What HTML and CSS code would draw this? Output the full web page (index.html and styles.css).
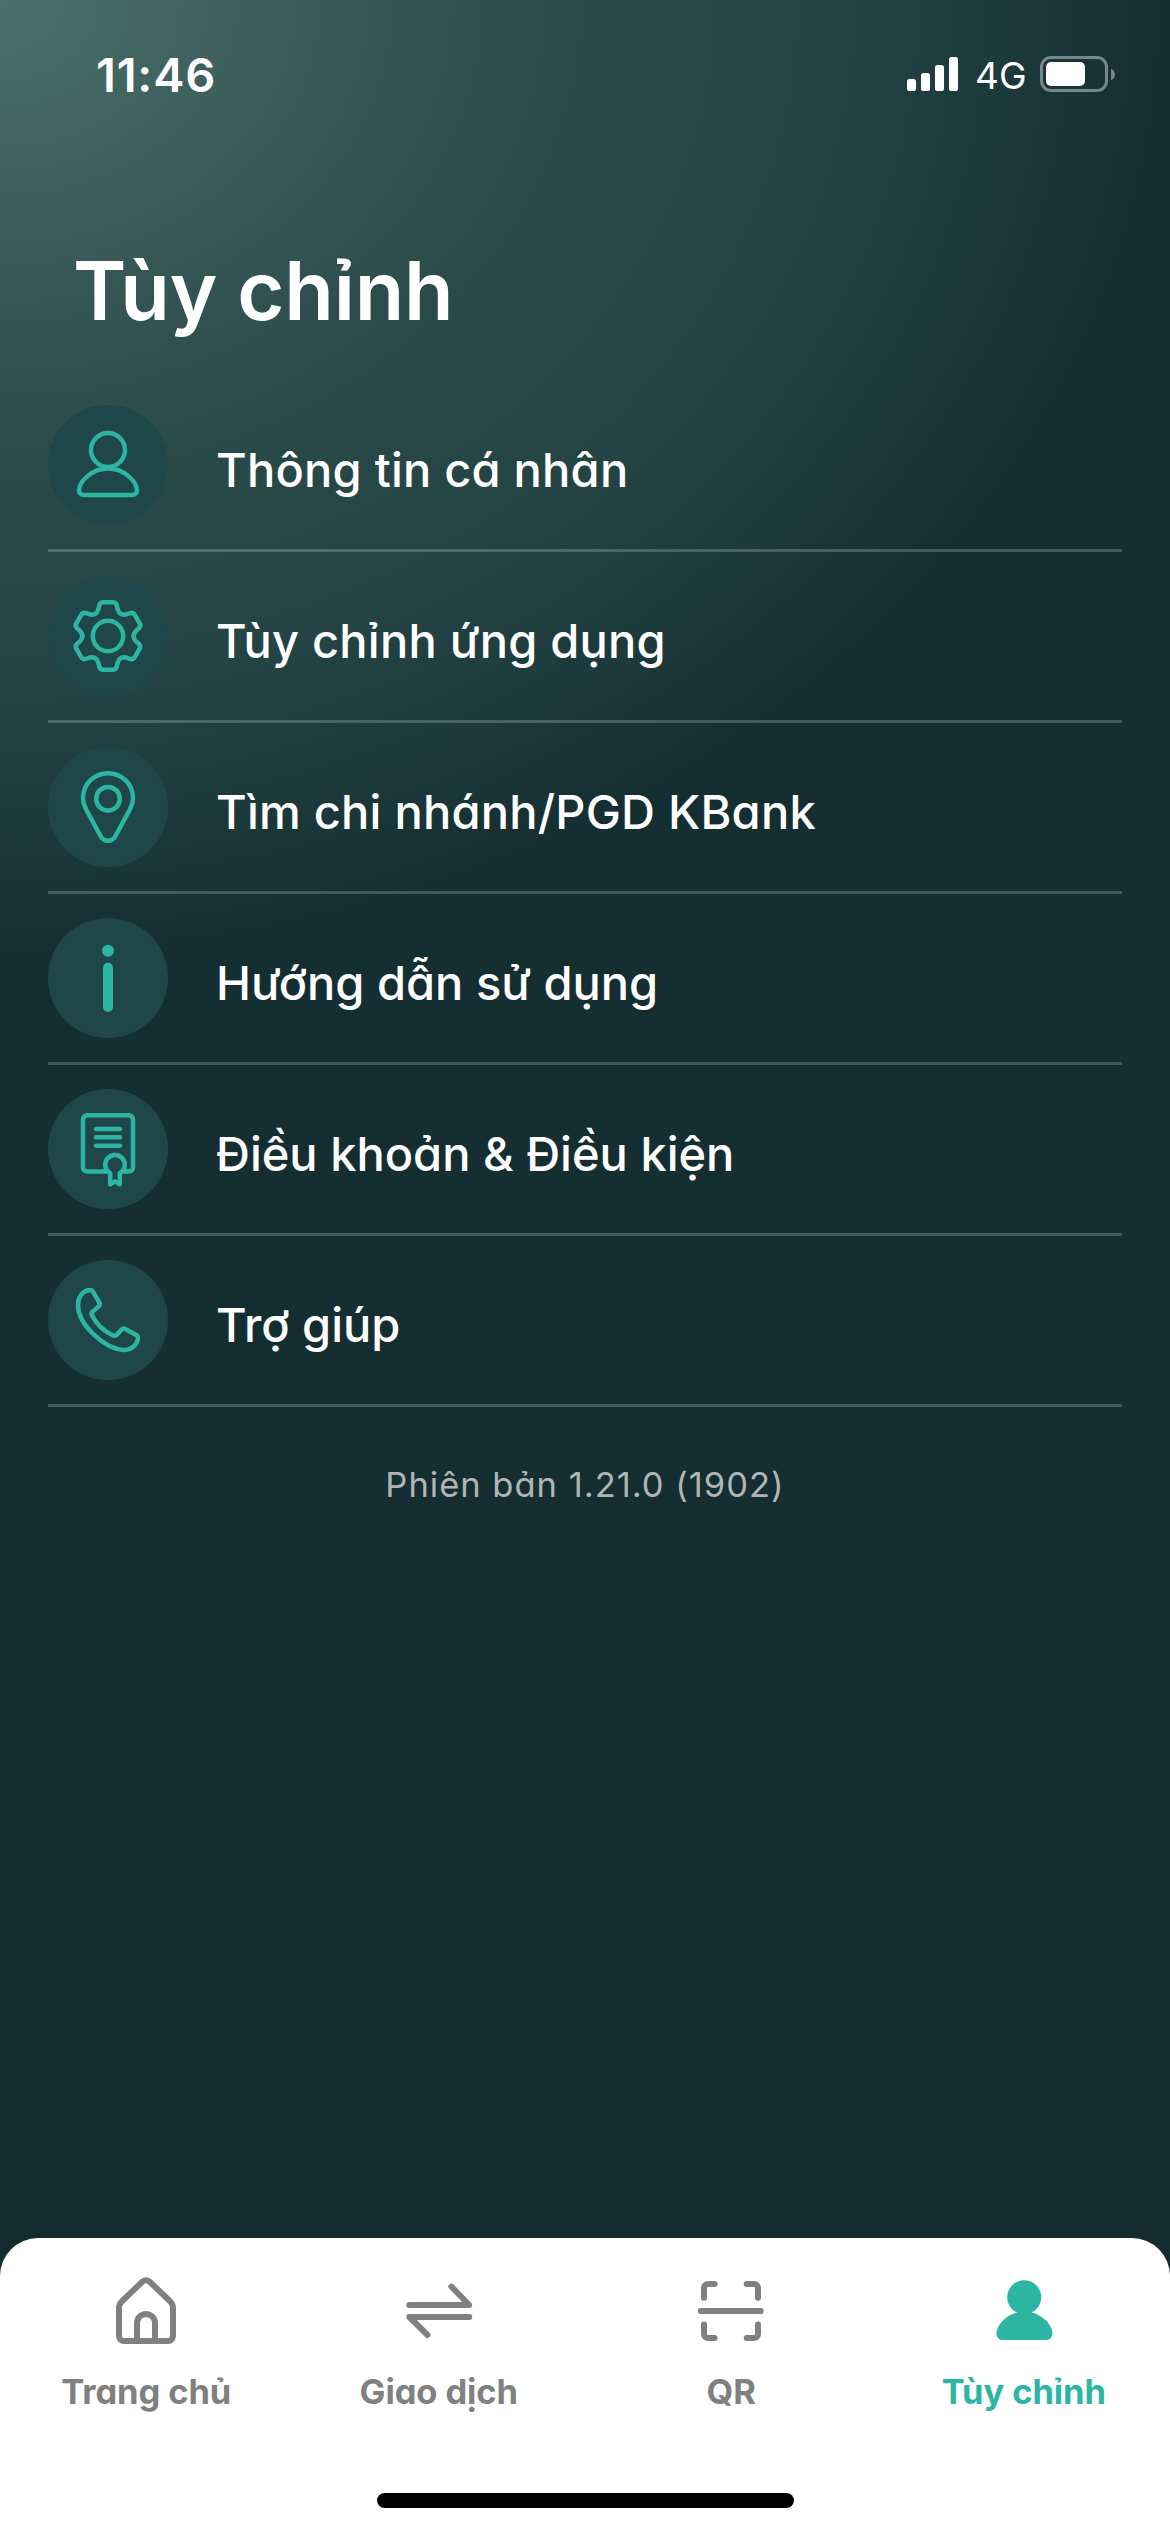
FILE: index.html
```html
<!DOCTYPE html>
<html lang="vi">
<head>
<meta charset="utf-8">
<title>Tùy chỉnh</title>
<link rel="stylesheet" href="styles.css">
</head>
<body>
<div class="screen">
  <header class="status">
    <span class="time">11:46</span>
    <div class="status-right">
      <svg class="signal" width="51" height="34" viewBox="0 0 51 34"><rect x="0" y="22" width="9" height="12" rx="2.6"/><rect x="14" y="16" width="9" height="18" rx="2.6"/><rect x="28" y="8" width="9" height="26" rx="2.6"/><rect x="42" y="0" width="9" height="34" rx="2.6"/></svg>
      <span class="network">4G</span>
      <svg class="battery" width="76" height="36" viewBox="0 0 76 36"><rect class="battery-case" x="1.5" y="1.5" width="65" height="33" rx="9.5"/><rect x="6" y="6" width="39" height="24" rx="5"/><path class="battery-tip" d="M71 13C76.300 14.500 76.300 22.500 71 24Z"/></svg>
    </div>
  </header>
  <h1 class="title">Tùy chỉnh</h1>
  <ul class="menu">
    <li class="row">
      <svg class="badge" viewBox="0 0 120 120"><circle class="disc" cx="60" cy="60" r="60"/><circle cx="60" cy="45" r="17"/><path d="M60 63.500C76 63.500 89 76.500 89 85.500C89 88 87 90 84 90H36C33 90 31 88 31 85.500C31 76.500 44 63.500 60 63.500Z"/></svg>
      <span class="label wide">Thông tin cá nhân</span>
    </li>
    <li class="row">
      <svg class="badge" viewBox="0 0 120 120"><defs><path id="tooth" d="M47.200 37.900C50 36.200 50.600 33.500 51 30.500C51.400 27.600 52.500 26.200 55 26.200H65C67.500 26.200 68.600 27.600 69 30.500C69.400 33.500 70 36.200 72.800 37.900"/></defs><circle class="disc" cx="60" cy="60" r="60"/><circle cx="60" cy="60" r="15.200"/><use href="#tooth"/><use href="#tooth" transform="rotate(60 60 60)"/><use href="#tooth" transform="rotate(120 60 60)"/><use href="#tooth" transform="rotate(180 60 60)"/><use href="#tooth" transform="rotate(240 60 60)"/><use href="#tooth" transform="rotate(300 60 60)"/></svg>
      <span class="label wide">Tùy chỉnh ứng dụng</span>
    </li>
    <li class="row">
      <svg class="badge" viewBox="0 0 120 120"><circle class="disc" cx="60" cy="60" r="60"/><circle cx="60" cy="51.700" r="11.800"/><path d="M60 26.200C74 26.200 85 37.200 85 51C85 55.500 83.800 59 81.800 62.500L67.800 88.500C64.500 95.500 55.500 95.500 52.200 88.500L38.200 62.500C36.200 59 35 55.500 35 51C35 37.200 46 26.200 60 26.200Z"/></svg>
      <span class="label wide">Tìm chi nhánh/PGD KBank</span>
    </li>
    <li class="row">
      <svg class="badge" viewBox="0 0 120 120"><circle class="disc" cx="60" cy="60" r="60"/><circle class="solid" cx="60" cy="32.700" r="6"/><rect class="solid" x="55" y="44.700" width="10" height="49.300" rx="5"/></svg>
      <span class="label">Hướng dẫn sử dụng</span>
    </li>
    <li class="row">
      <svg class="badge" viewBox="0 0 120 120"><circle class="disc" cx="60" cy="60" r="60"/><path d="M59 82.500H39A4 4 0 0 1 35 78.500V30.300A4 4 0 0 1 39 26.300H81A4 4 0 0 1 85 30.300V78.500A4 4 0 0 1 81 82.500H75M48 40H72M48 48.300H72M48 56.700H72M62.200 95.300V84.300A9.800 9.800 0 1 1 71.800 84.300V95.300L67 92.300Z"/></svg>
      <span class="label">Điều khoản &amp; Điều kiện</span>
    </li>
    <li class="row">
      <svg class="badge" viewBox="0 0 120 120"><circle class="disc" cx="60" cy="60" r="60"/><path d="M42 30C43.600 29.800 44.400 30.500 45 31.700L51.300 42.500C52.300 44.200 52 45.200 50.800 46.400L44.600 51.600C43.400 52.700 43.200 53.600 43.800 55C48.500 64 55.500 71 64.500 75.300C66.500 76.200 67.500 76 68.800 74.800L73.600 69.500C74.800 68.200 75.800 68.100 77.300 68.900L88.200 75C89.700 75.900 90.200 76.800 90 78.300C89 85.800 82.500 90.200 75.500 90C57 89 30.200 65 30 45.500C29.800 37.500 34 30.700 42 30Z"/></svg>
      <span class="label">Trợ giúp</span>
    </li>
  </ul>
  <p class="version">Phiên bản 1.21.0 (1902)</p>
  <nav class="tabs">
    <div class="tab-row">
      <a class="tab"><svg viewBox="0 0 80 80"><path d="M36 12C38.500 9.700 41.500 9.700 44 12L64.300 31.500C66.200 33.500 67 35.500 67 38V66A5 5 0 0 1 62 71H18A5 5 0 0 1 13 66V38C13 35.500 13.800 33.500 15.700 31.500ZM31 71V53A9 9 0 0 1 49 53V71"/></svg><span>Trang chủ</span></a>
      <a class="tab"><svg viewBox="0 0 80 80"><path d="M10.300 35H70.200L52.400 16.700M70.200 47H10.300L28.500 65"/></svg><span>Giao dịch</span></a>
      <a class="tab"><svg viewBox="0 0 80 80"><path d="M9.800 41H69.800M13 27.700V18A4 4 0 0 1 17 14H23.600M55.700 14H63A4 4 0 0 1 67 18V27.700M67 54.500V64A4 4 0 0 1 63 68H55.700M23.600 68H17A4 4 0 0 1 13 64V54.500"/></svg><span>QR</span></a>
      <a class="tab active"><svg viewBox="0 0 80 80"><circle class="fill" cx="40.200" cy="27.300" r="17"/><path class="fill" d="M40.400 41.500C56 41.500 68.400 54 68.400 63.500C68.400 67.500 65.500 70 62 70H18.800C15.300 70 12.400 67.500 12.400 63.500C12.400 54 24.800 41.500 40.400 41.500Z"/></svg><span>Tùy chỉnh</span></a>
    </div>
    <div class="home-indicator"></div>
  </nav>
</div>
</body>
</html>
```
FILE: styles.css
```css
* { box-sizing: border-box; }
body { margin: 0; font-family: Inter, "Noto Sans", sans-serif; }

.screen {
  width: 1170px;
  height: 2532px;
  overflow: hidden;
  display: flex;
  flex-direction: column;
  color: #fff;
  background: radial-gradient(ellipse 1170px 960px at 0 0, #4a706b 0%, #3b5c5a 25%, #305051 39%, #294948 52%, #244344 72%, #1c383a 88%, #152e31 100%) #152e31;
  font-feature-settings: "cv11" 1;
}

.status {
  height: 150px;
  padding: 0 54px 0 96px;
  display: flex;
  justify-content: space-between;
}
.time {
  padding-top: 47px;
  font-size: 47px;
  line-height: 56px;
  font-weight: 600;
  letter-spacing: .8px;
}
.status-right { display: flex; align-items: flex-start; padding-top: 56px; }
.signal { margin-top: 1px; fill: #fff; }
.network {
  width: 50px;
  margin: -3px 15px 0 17px;
  font-size: 37px;
  line-height: 45px;
  white-space: nowrap;
}
.battery { fill: #fff; }
.battery .battery-case { fill: none; stroke: #75898a; stroke-width: 3; }
.battery .battery-tip { fill: #75898a; }

.title {
  height: 231px;
  margin: 0;
  padding: 93px 0 0 73px;
  font-size: 81px;
  line-height: 97px;
  font-weight: 600;
  letter-spacing: -.2px;
}

.menu { margin: 0; padding: 0 48px; list-style: none; }
.row {
  height: 171px;
  display: flex;
  align-items: center;
  gap: 48px;
  border-bottom: 3px solid rgba(255, 255, 255, .2);
}
.badge {
  width: 120px;
  height: 120px;
  fill: none;
  stroke: #2db5a3;
  stroke-width: 4.5;
  stroke-linecap: round;
  stroke-linejoin: round;
}
.badge .disc { fill: #1f474a; stroke: none; }
.badge .solid { fill: #2db5a3; stroke: none; }
.label {
  padding-top: 9px;
  font-size: 47px;
  line-height: 56px;
  font-weight: 500;
  white-space: nowrap;
}
.label.wide { letter-spacing: .23px; }

.version {
  margin: 0;
  padding-top: 57px;
  text-align: center;
  font-size: 34.5px;
  line-height: 42px;
  letter-spacing: 1px;
  color: #b0b5b6;
}

.tabs {
  margin-top: auto;
  height: 294px;
  padding-top: 32px;
  border-radius: 38px 38px 0 0;
  background: #fff;
  box-shadow: 0 -6px 24px rgba(0, 0, 0, .08);
  display: flex;
  flex-direction: column;
  align-items: center;
}
.tab-row { width: 100%; display: grid; grid-template-columns: repeat(4, 1fr); }
.tab {
  display: flex;
  flex-direction: column;
  align-items: center;
  gap: 21px;
  color: #808080;
  font-size: 34.5px;
  line-height: 42px;
  font-weight: 700;
  letter-spacing: -.1px;
}
.tab svg {
  width: 80px;
  height: 80px;
  fill: none;
  stroke: currentColor;
  stroke-width: 6;
  stroke-linecap: round;
  stroke-linejoin: round;
}
.tab .fill { fill: currentColor; stroke: none; }
.tab.active { color: #2db5a3; }
.home-indicator {
  width: 417px;
  height: 15px;
  margin-top: auto;
  margin-bottom: 24px;
  border-radius: 8px;
  background: #000;
}
```
